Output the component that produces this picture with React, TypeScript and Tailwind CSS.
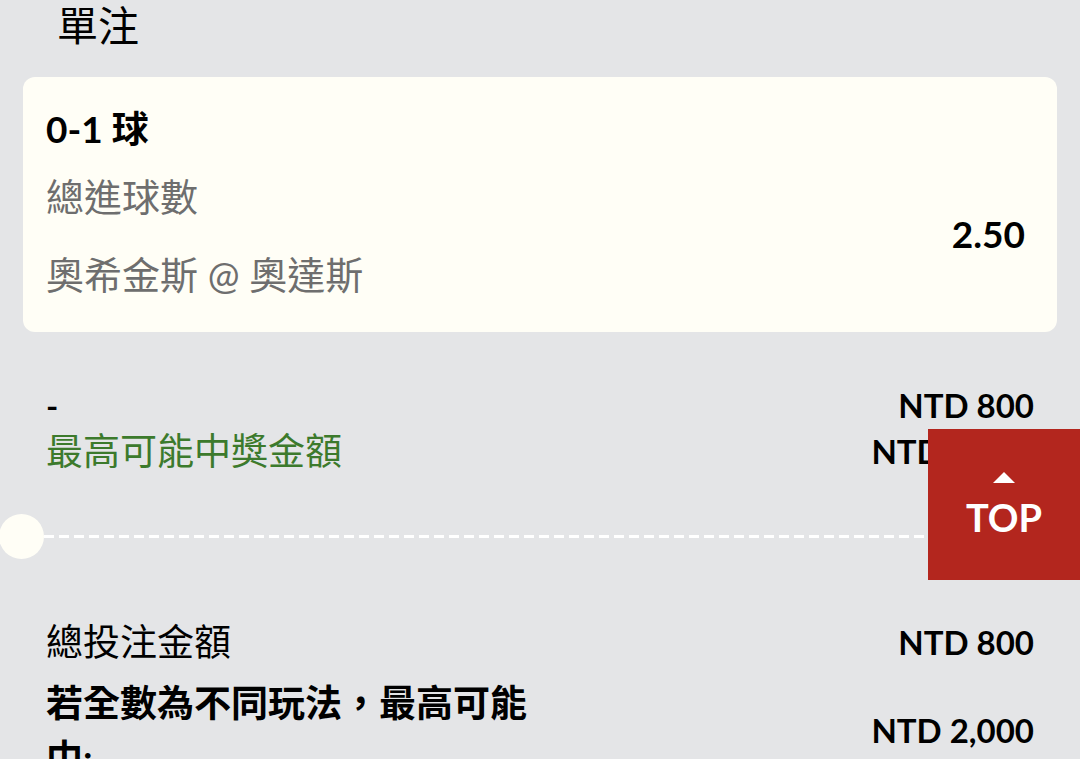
import React from 'react';

const FONT = "font-['Lato','Noto_Sans_CJK_TC',sans-serif]";

function Row({ left, right, className = '' }: { left: React.ReactNode; right: React.ReactNode; className?: string }) {
  return (
    <div className={`flex items-center justify-between px-[46px] ${className}`}>
      <div className="flex items-center">{left}</div>
      <div className="text-[33px] font-bold leading-[40px] text-black">{right}</div>
    </div>
  );
}

export default function App() {
  return (
    <div className={`relative min-h-screen overflow-hidden bg-[#e4e5e7] text-black ${FONT}`}>
      <div className="h-[52px] pl-[57px] text-[41px] leading-[52px]">單注</div>

      {/* selection card */}
      <div className="mx-[23px] mt-[25px] flex h-[255px] justify-between rounded-[12px] bg-[#fffef6] pl-[23px] pr-[32px]">
        <div className="pt-[30px]">
          <div className="h-[44px] text-[37px] font-bold leading-[44px]">0-1 球</div>
          <div className="mt-[23px] h-[44px] text-[38px] leading-[44px] text-[#6e6e6e]">總進球數</div>
          <div className="mt-[34px] h-[44px] text-[38px] leading-[44px] text-[#6e6e6e]">奧希金斯 @ 奧達斯</div>
        </div>
        <div className="pt-[135px] text-[37px] font-bold leading-[44px]">2.50</div>
      </div>

      <div className="mt-[50px]">
        <Row className="h-[46px]" left={<span className="text-[33px] font-bold leading-[46px]">-</span>} right="NTD 800" />
        <Row
          className="h-[46px]"
          left={<span className="text-[37px] leading-[46px] text-[#3c7a2c]">最高可能中獎金額</span>}
          right="NTD 2,000"
        />
      </div>

      {/* ticket tear line */}
      <div className="mt-[40px] flex h-[45px] items-center">
        <div className="ml-[-1px] h-[45px] w-[45px] shrink-0 rounded-full bg-[#fffef6]" />
        <div className="h-[3px] flex-1 bg-[repeating-linear-gradient(90deg,#ffffff_0_10px,transparent_10px_15px)]" />
      </div>

      <div className="mt-[60px]">
        <Row className="h-[46px]" left={<span className="text-[37px] leading-[46px]">總投注金額</span>} right="NTD 800" />
        <Row
          className="mt-[10px]"
          left={<div className="w-[500px] text-[37px] font-bold leading-[55px]">若全數為不同玩法，最高可能中:</div>}
          right="NTD 2,000"
        />
      </div>

      {/* back to top */}
      <button className="absolute right-0 top-[429px] flex h-[151px] w-[152px] flex-col items-center justify-center bg-[#b3261e] text-white">
        <svg width="22" height="11" viewBox="0 0 22 11" className="mb-[14px]">
          <path d="M11 0 L22 11 L0 11 Z" fill="#fff" />
        </svg>
        <span className="text-[38px] font-bold leading-[40px]">TOP</span>
      </button>
    </div>
  );
}
